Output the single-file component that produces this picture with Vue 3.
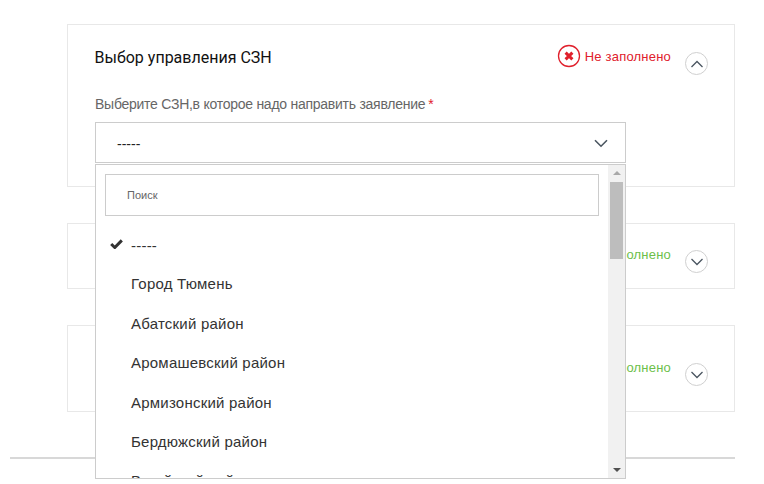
<script setup>
const items = ['Город Тюмень', 'Абатский район', 'Аромашевский район', 'Армизонский район', 'Бердюжский район', 'Вагайский район']
const cards = [
  { cls: 'card-b', label: 'Заполнено' },
  { cls: 'card-c', label: 'Заполнено' },
]
</script>

<template>
  <div class="page">
    <div class="column">
      <section class="card card-a">
        <div class="head">
          <h2 class="title">Выбор управления СЗН</h2>
          <div class="status">
            <svg class="err" width="24" height="24" viewBox="0 0 24 24">
              <circle cx="12" cy="12" r="10.5" fill="none" stroke="#e0202c" stroke-width="1.3" />
              <path d="M8.6 8.6l6.8 6.8M15.4 8.6l-6.8 6.8" stroke="#e0202c" stroke-width="3" fill="none" />
            </svg>
            <span class="red">Не заполнено</span>
          </div>
          <span class="round up">
            <svg width="14" height="8" viewBox="0 0 14 8"><path d="M1.5 7L7 1.5 12.5 7" fill="none" stroke="#4a5560" stroke-width="1.3" /></svg>
          </span>
        </div>
        <div class="label">Выберите СЗН,в которое надо направить заявление<span class="star">*</span></div>
        <div class="select">
          <span>-----</span>
          <svg width="14" height="9" viewBox="0 0 14 9"><path d="M1 1.2l6 6 6-6" fill="none" stroke="#4a5560" stroke-width="1.6" /></svg>
        </div>
      </section>

      <section v-for="c in cards" :key="c.cls" class="card" :class="c.cls">
        <span class="green">{{ c.label }}</span>
        <span class="round">
          <svg width="14" height="8" viewBox="0 0 14 8"><path d="M1.5 1L7 6.5 12.5 1" fill="none" stroke="#4a5560" stroke-width="1.3" /></svg>
        </span>
      </section>

      <div class="rule"></div>
    </div>

    <div class="dropdown">
      <div class="list">
        <div class="search">Поиск</div>
        <div class="option selected">
          <svg class="check" width="13" height="10" viewBox="0 0 13 10"><path d="M1.2 5l3.6 3.5L11.8 1.4" fill="none" stroke="#333" stroke-width="3" /></svg>
          <span>-----</span>
        </div>
        <div v-for="item in items" :key="item" class="option">{{ item }}</div>
      </div>
      <div class="scrollbar">
        <span class="arrow arrow-up"></span>
        <span class="thumb"></span>
        <span class="arrow arrow-down"></span>
      </div>
    </div>
  </div>
</template>

<style>
html, body { margin: 0; background: #fff; }
</style>

<style scoped>
.page {
  position: relative;
  width: 764px;
  height: 484px;
  overflow: hidden;
  background: #fff;
  font-family: "Liberation Sans", Arial, sans-serif;
}
.column {
  display: flex;
  flex-direction: column;
  padding: 24px 29px 0 10px;
}
.card {
  box-sizing: border-box;
  margin-left: 57px;
  border: 1px solid #e8e8e8;
  position: relative;
}
.card-a { height: 163px; padding: 0 27px; }
.card-b { height: 66px; margin-top: 36px; }
.card-c { height: 87px; margin-top: 36px; }
.head {
  display: flex;
  align-items: flex-start;
  height: 71px;
}
.title {
  margin: 23px 0 0 -0.5px;
  font-family: Roboto, sans-serif;
  font-size: 16px;
  line-height: 20px;
  font-weight: 400;
  color: #111;
  flex: 1;
}
.status {
  display: flex;
  align-items: center;
  gap: 4px;
  margin: 19px 36px 0 0;
}
.err { display: block; }
.red {
  position: relative;
  top: 1px;
  color: #e0202c;
  font-size: 13px;
  line-height: 24px;
  letter-spacing: .2px;
}
.round {
  box-sizing: border-box;
  width: 23px;
  height: 23px;
  border: 1px solid #d0d0d0;
  border-radius: 50%;
  display: flex;
  align-items: center;
  justify-content: center;
  background: #fff;
}
.up { position: absolute; right: 26px; top: 27px; }
.card-b .round { position: absolute; right: 26px; top: 26px; }
.card-c .round { position: absolute; right: 26px; top: 37px; }
.green {
  position: absolute;
  right: 63px;
  color: #6cc04a;
  font-size: 13px;
  letter-spacing: .2px;
  line-height: 16px;
}
.card-b .green { top: 23px; }
.card-c .green { top: 34px; }
.label {
  font-size: 14px;
  letter-spacing: -.26px;
  line-height: 16px;
  color: #666;
}
.star { color: #e0202c; margin-left: 3px; }
.select {
  box-sizing: border-box;
  height: 41px;
  margin-top: 10px;
  width: 531px;
  border: 1px solid #ccc;
  display: flex;
  align-items: center;
  justify-content: space-between;
  padding: 2px 17px 0 21px;
  font-size: 14px;
  color: #222;
}
.rule {
  height: 2px;
  margin-top: 45px;
  background: #d8d8d8;
}
.dropdown {
  position: absolute;
  left: 95px;
  top: 164px;
  width: 531px;
  height: 315px;
  box-sizing: border-box;
  border: 1px solid #ccc;
  background: #fff;
  display: flex;
  overflow: hidden;
}
.list { flex: 1; min-width: 0; overflow: hidden; }
.search {
  box-sizing: border-box;
  height: 42px;
  margin: 9px 9px 0 9px;
  border: 1px solid #ccc;
  padding-left: 21px;
  line-height: 40px;
  font-size: 11px;
  color: #666;
}
.option {
  position: relative;
  padding-left: 35px;
  height: 39.4px;
  line-height: 39.4px;
  font-size: 15px;
  letter-spacing: .22px;
  color: #333;
  white-space: nowrap;
  top: -1px;
}
.selected { margin-top: 10px; top: 0; }
.check { position: absolute; left: 14px; top: 13px; }
.scrollbar {
  width: 17px;
  flex: none;
  background: #f1f1f1;
  position: relative;
}
.thumb {
  position: absolute;
  left: 2px;
  top: 17px;
  width: 13px;
  height: 77px;
  background: #bdbdbd;
}
.arrow {
  position: absolute;
  left: 5px;
  width: 0;
  height: 0;
  border-left: 4px solid transparent;
  border-right: 4px solid transparent;
}
.arrow-up { top: 6px; border-bottom: 4px solid #a8a8a8; }
.arrow-down { bottom: 6px; border-top: 4px solid #505050; }
</style>
